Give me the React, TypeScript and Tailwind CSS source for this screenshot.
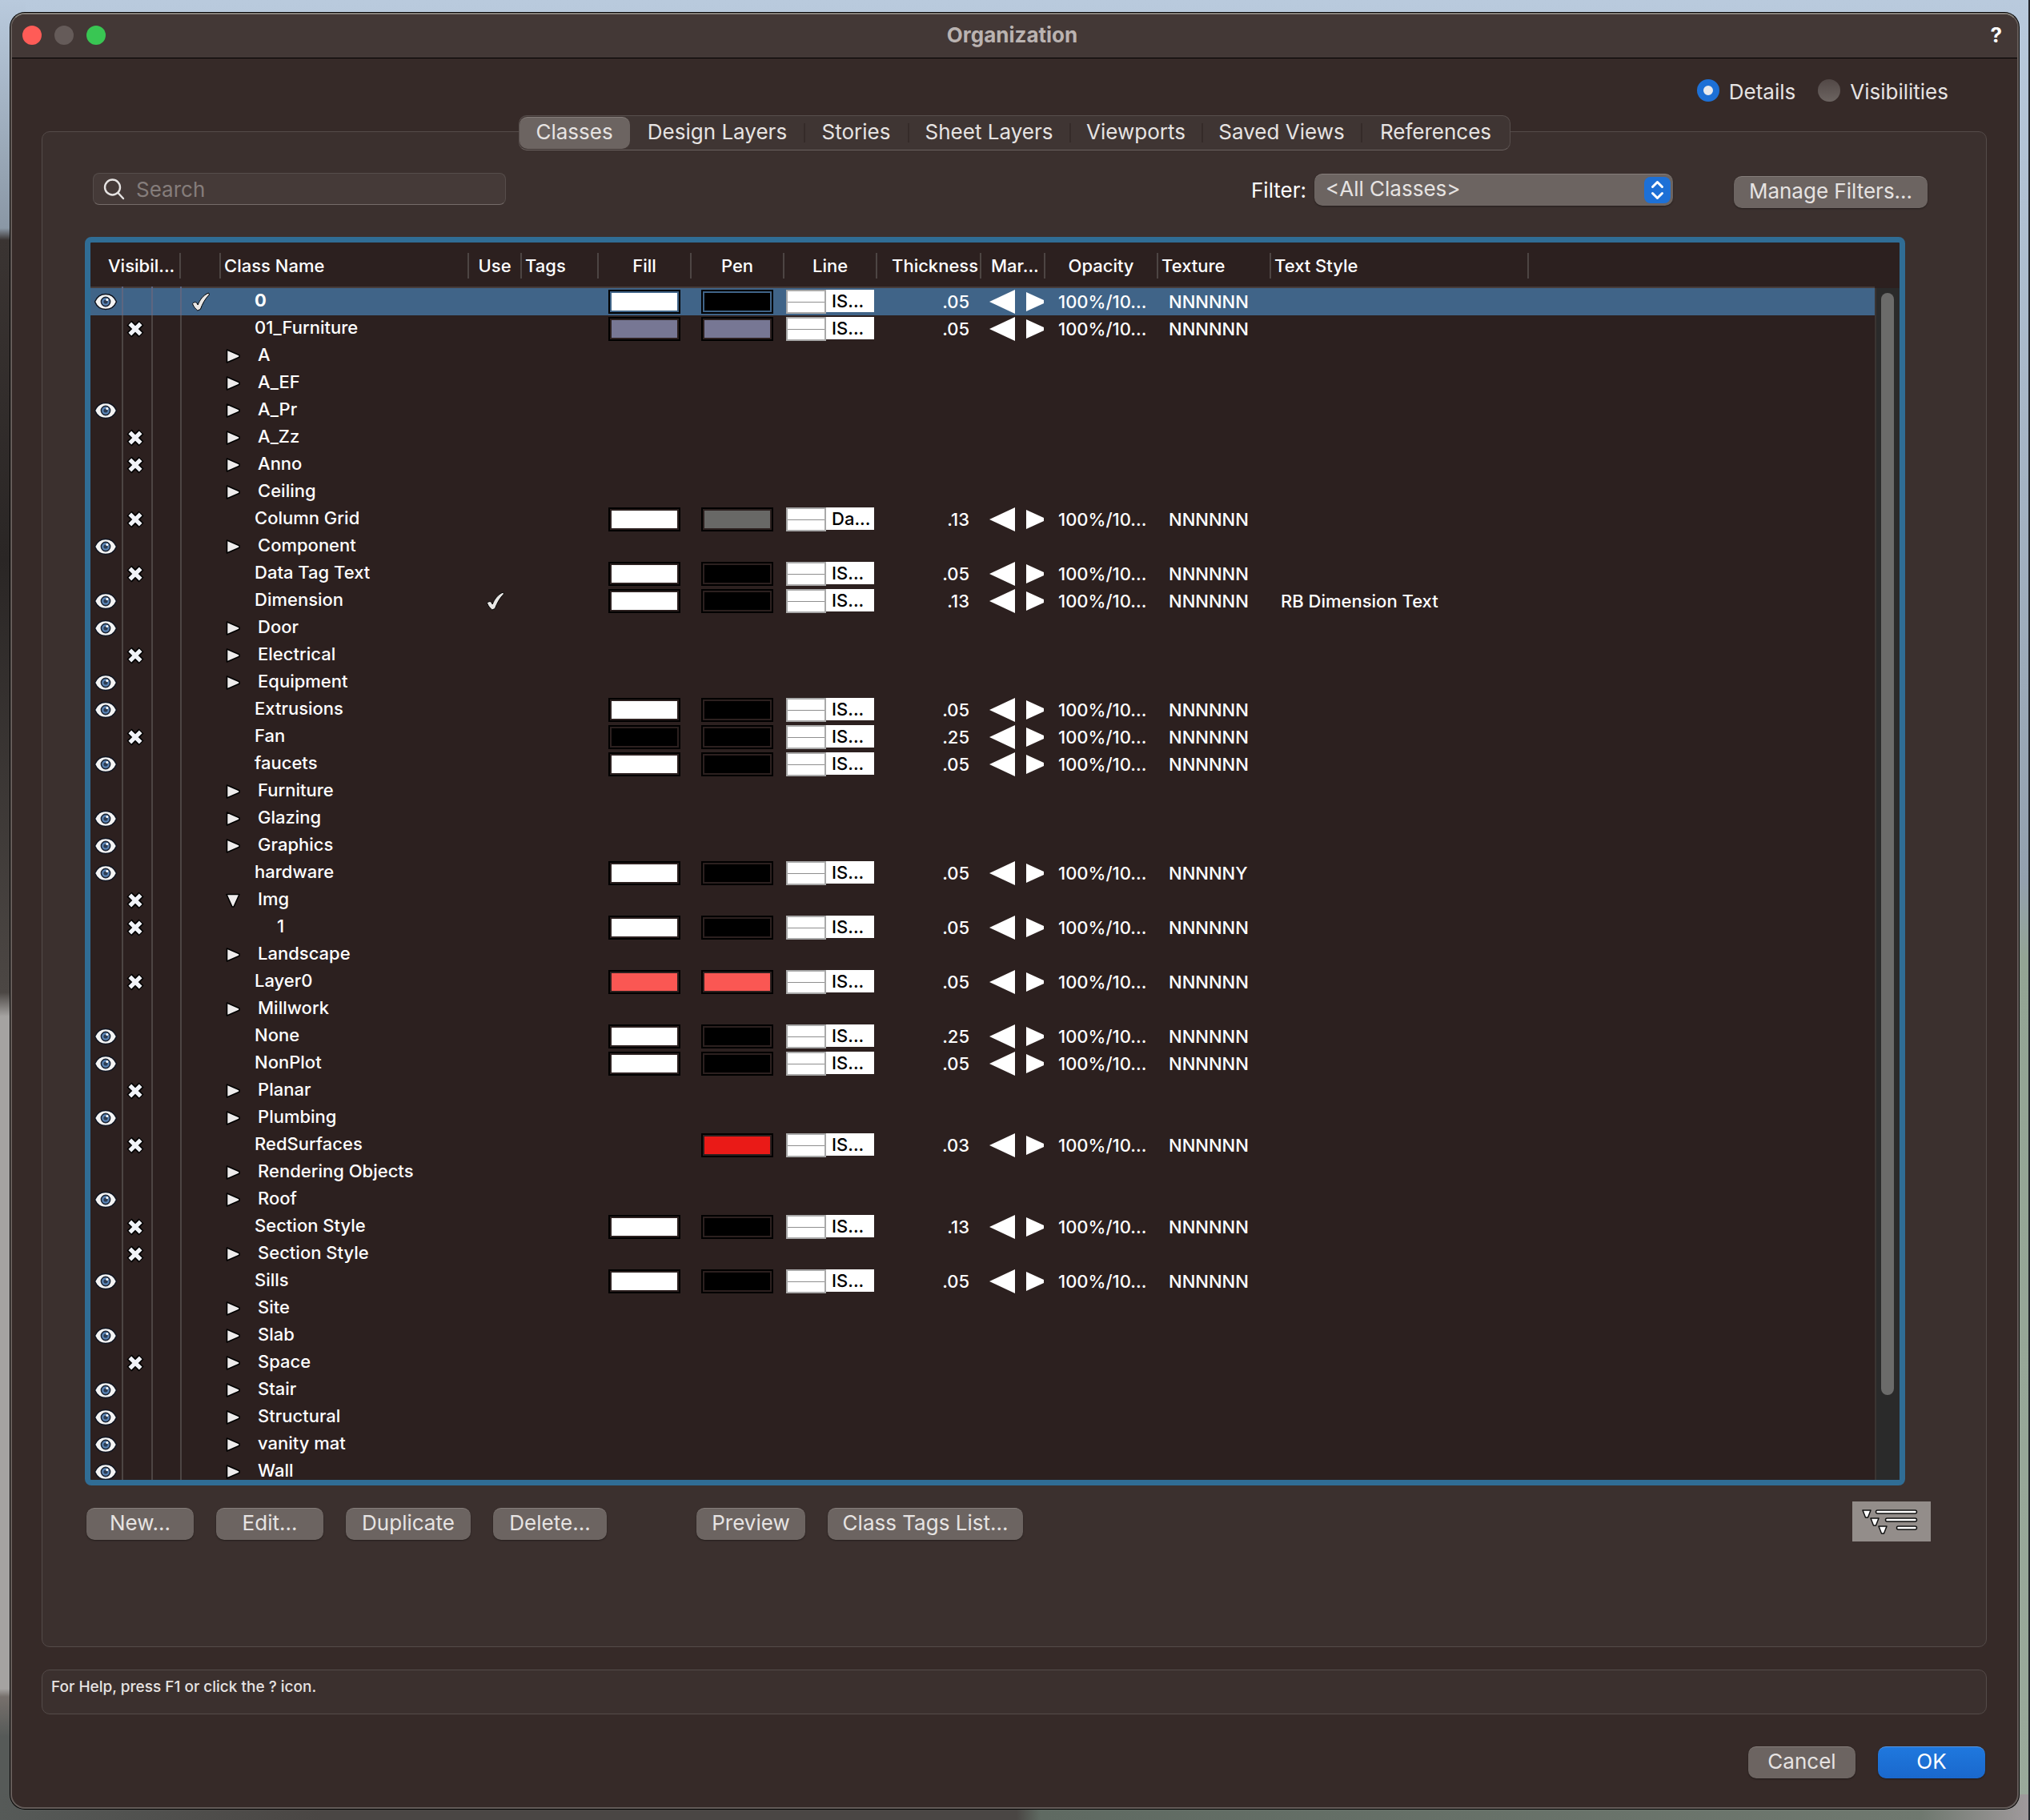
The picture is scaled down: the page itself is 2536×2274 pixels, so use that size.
import { useState } from "react";
import clsx from "clsx";

type Attrs = {
  fill?: string;
  pen: string;
  line?: string;
  thickness: string;
  texture?: string;
  textStyle?: string;
};

type ClassRow = {
  name: string;
  kind: "leaf" | "group" | "open" | "child";
  vis?: "eye" | "x";
  active?: boolean;
  use?: boolean;
  attrs?: Attrs;
};

const WHITE = "bg-white";
const BLACK = "bg-black";

const std: Attrs = { fill: WHITE, pen: BLACK, thickness: ".05" };

const rows: ClassRow[] = [
  { name: "0", kind: "leaf", vis: "eye", active: true, attrs: std },
  { name: "01_Furniture", kind: "leaf", vis: "x", attrs: { fill: "bg-[#777794]", pen: "bg-[#777794]", thickness: ".05" } },
  { name: "A", kind: "group" },
  { name: "A_EF", kind: "group" },
  { name: "A_Pr", kind: "group", vis: "eye" },
  { name: "A_Zz", kind: "group", vis: "x" },
  { name: "Anno", kind: "group", vis: "x" },
  { name: "Ceiling", kind: "group" },
  { name: "Column Grid", kind: "leaf", vis: "x", attrs: { fill: WHITE, pen: "bg-[#686866]", line: "Da...", thickness: ".13" } },
  { name: "Component", kind: "group", vis: "eye" },
  { name: "Data Tag Text", kind: "leaf", vis: "x", attrs: std },
  { name: "Dimension", kind: "leaf", vis: "eye", use: true, attrs: { ...std, thickness: ".13", textStyle: "RB Dimension Text" } },
  { name: "Door", kind: "group", vis: "eye" },
  { name: "Electrical", kind: "group", vis: "x" },
  { name: "Equipment", kind: "group", vis: "eye" },
  { name: "Extrusions", kind: "leaf", vis: "eye", attrs: std },
  { name: "Fan", kind: "leaf", vis: "x", attrs: { fill: BLACK, pen: BLACK, thickness: ".25" } },
  { name: "faucets", kind: "leaf", vis: "eye", attrs: std },
  { name: "Furniture", kind: "group" },
  { name: "Glazing", kind: "group", vis: "eye" },
  { name: "Graphics", kind: "group", vis: "eye" },
  { name: "hardware", kind: "leaf", vis: "eye", attrs: { ...std, texture: "NNNNNY" } },
  { name: "Img", kind: "open", vis: "x" },
  { name: "1", kind: "child", vis: "x", attrs: std },
  { name: "Landscape", kind: "group" },
  { name: "Layer0", kind: "leaf", vis: "x", attrs: { fill: "bg-[#fa5753]", pen: "bg-[#fa5753]", thickness: ".05" } },
  { name: "Millwork", kind: "group" },
  { name: "None", kind: "leaf", vis: "eye", attrs: { ...std, thickness: ".25" } },
  { name: "NonPlot", kind: "leaf", vis: "eye", attrs: std },
  { name: "Planar", kind: "group", vis: "x" },
  { name: "Plumbing", kind: "group", vis: "eye" },
  { name: "RedSurfaces", kind: "leaf", vis: "x", attrs: { pen: "bg-[#ea1a17]", thickness: ".03" } },
  { name: "Rendering Objects", kind: "group" },
  { name: "Roof", kind: "group", vis: "eye" },
  { name: "Section Style", kind: "leaf", vis: "x", attrs: { ...std, thickness: ".13" } },
  { name: "Section Style", kind: "group", vis: "x" },
  { name: "Sills", kind: "leaf", vis: "eye", attrs: std },
  { name: "Site", kind: "group" },
  { name: "Slab", kind: "group", vis: "eye" },
  { name: "Space", kind: "group", vis: "x" },
  { name: "Stair", kind: "group", vis: "eye" },
  { name: "Structural", kind: "group", vis: "eye" },
  { name: "vanity mat", kind: "group", vis: "eye" },
  { name: "Wall", kind: "group", vis: "eye" },
];

const tabs = [
  { label: "Classes", width: "w-[138px]" },
  { label: "Design Layers", width: "w-[217px]" },
  { label: "Stories", width: "w-[130px]" },
  { label: "Sheet Layers", width: "w-[202px]" },
  { label: "Viewports", width: "w-[165px]" },
  { label: "Saved Views", width: "w-[199px]" },
  { label: "References", width: "w-[186px]" },
];

const headers = [
  { label: "Visibil...", span: 3, cls: "pl-[22px]" },
  { label: "", cls: "" },
  { label: "Class Name", cls: "pl-1" },
  { label: "Use", cls: "justify-center" },
  { label: "Tags", cls: "pl-1" },
  { label: "Fill", cls: "justify-center" },
  { label: "Pen", cls: "justify-center" },
  { label: "Line", cls: "justify-center" },
  { label: "Thickness", cls: "justify-end pr-[2px]" },
  { label: "Mar...", cls: "pl-3" },
  { label: "Opacity", cls: "justify-center" },
  { label: "Texture", cls: "pl-1" },
  { label: "Text Style", cls: "pl-1" },
];

function EyeIcon() {
  return (
    <svg width="30" height="22" viewBox="0 0 30 22" className="ml-1 block">
      <path d="M1.5 11C4 5 9 1.5 15 1.5S26 5 28.500 11C26 17 21 20.500 15 20.500S4 17 1.500 11Z" fill="#f4f4f4" stroke="#0f1420" strokeWidth="1.500" />
      <circle cx="15" cy="11" r="5.600" fill="#5b86b8" stroke="#1c2636" strokeWidth="1.600" />
      <circle cx="15" cy="11" r="2.600" fill="#2c3c52" />
      <circle cx="16.800" cy="8.600" r="1.500" fill="#fff" />
    </svg>
  );
}

function CrossIcon() {
  return (
    <svg width="22" height="22" viewBox="0 0 22 22" className="ml-1 block">
      <path d="M3.500 3.500 18.500 18.500M18.500 3.500 3.500 18.500" stroke="#000" strokeWidth="8.600" />
      <path d="M4.300 4.300 17.700 17.700M17.700 4.300 4.300 17.700" stroke="#f1f3f8" strokeWidth="5.200" />
    </svg>
  );
}

function CheckIcon() {
  return (
    <svg width="24" height="24" viewBox="0 0 24 24" className="block">
      <path d="M1.500 14.500C3 12.300 6 12 7 13.800L8.200 16C10.500 10 14.500 4 21.500 1L22.500 3C17 8.500 14 14.500 11.300 21.500L7.800 23C5.500 21 3 18.500 1.500 14.500Z" fill="#e9e7e5" stroke="#000" strokeWidth="1" />
    </svg>
  );
}

function Disclosure({ open }: { open?: boolean }) {
  return (
    <svg width="18" height="18" viewBox="0 0 18 18" className="block">
      <path d={open ? "M1 1.500H17L10 17H8Z" : "M1.500 1 17 7.800V10.200L1.500 17Z"} fill="#eeecec" stroke="#000" strokeWidth="1.600" strokeLinejoin="round" />
    </svg>
  );
}

function Swatch({ color }: { color: string }) {
  return (
    <div className="ml-3 h-[30px] w-[90px] border-2 border-black p-[2px]">
      <div className={clsx("h-full w-full", color)} />
    </div>
  );
}

function LineSample({ label }: { label: string }) {
  return (
    <div className="ml-[2px] flex h-[30px] items-start">
      <div className="flex h-[30px] w-[50px] items-center border-2 border-[#a9a9a9] bg-white">
        <div className="h-px w-full bg-[#8f8f8f]" />
      </div>
      <div className="h-7 w-[60px] bg-white pl-[7px] leading-7 text-black">{label}</div>
    </div>
  );
}

function Markers() {
  return (
    <svg width="70" height="30" viewBox="0 0 70 30" className="ml-[10px] block" fill="#fff">
      <path d="M0 15 32 0V30Z" />
      <path d="M46 3 68 13V17L46 27Z" />
    </svg>
  );
}

function Row({ row }: { row: ClassRow }) {
  const { attrs } = row;
  const guide = clsx("border-r-2 p-0", row.active ? "border-[#5d6680]" : "border-[#4d4543]");
  return (
    <tr className={clsx("h-[34px]", row.active && "bg-[#406488]")}>
      <td className={guide}>{row.vis === "eye" && <EyeIcon />}</td>
      <td className={guide}>{row.vis === "x" && <CrossIcon />}</td>
      <td className={guide} />
      <td className="p-0">
        <div className="pl-3">{row.active && <CheckIcon />}</div>
      </td>
      <td className="p-0">
        <div className={clsx("flex h-[34px] items-center pl-[6px]", row.active && "font-bold")}>
          <span className="w-[18px]">
            {row.kind === "group" && <Disclosure />}
            {row.kind === "open" && <Disclosure open />}
          </span>
          <span
            className={clsx(
              "pb-1",
              row.kind === "leaf" && "pl-[18px]",
              row.kind === "child" && "pl-[46px]",
              (row.kind === "group" || row.kind === "open") && "pl-[22px]"
            )}
          >
            {row.name}
          </span>
        </div>
      </td>
      <td className="p-0">
        <div className="flex justify-center">{row.use && <CheckIcon />}</div>
      </td>
      <td className="p-0" />
      <td className="p-0">{attrs?.fill && <Swatch color={attrs.fill} />}</td>
      <td className="p-0">{attrs && <Swatch color={attrs.pen} />}</td>
      <td className="p-0">{attrs && <LineSample label={attrs.line ?? "IS..."} />}</td>
      <td className="p-0 pr-[15px] text-right">{attrs?.thickness}</td>
      <td className="p-0">{attrs && <Markers />}</td>
      <td className="p-0 pl-4">{attrs && "100%/10..."}</td>
      <td className="p-0 pl-[13px]">{attrs && (attrs.texture ?? "NNNNNN")}</td>
      <td className="p-0 pl-3">{attrs?.textStyle}</td>
      <td className="p-0" />
    </tr>
  );
}

function ClassTable() {
  return (
    <div className="mt-9 mr-[101px] ml-[53px] flex h-[1560px] overflow-hidden rounded-lg border-[7px] border-[#306d95] bg-[#2c201f]">
      <div className="min-w-0 flex-1 overflow-hidden">
        <table className="w-full table-fixed border-collapse text-[22px] leading-7 font-medium whitespace-nowrap text-white">
          <colgroup>
            <col className="w-[40px]" />
            <col className="w-[37px]" />
            <col className="w-[36px]" />
            <col className="w-[50px]" />
            <col className="w-[310px]" />
            <col className="w-[66px]" />
            <col className="w-[96px]" />
            <col className="w-[116px]" />
            <col className="w-[116px]" />
            <col className="w-[116px]" />
            <col className="w-[130px]" />
            <col className="w-[80px]" />
            <col className="w-[141px]" />
            <col className="w-[141px]" />
            <col className="w-[322px]" />
            <col />
          </colgroup>
          <thead>
            <tr className="h-[56px] border-b-2 border-[#463c3a]">
              {headers.map((h, i) => (
                <th key={i} colSpan={h.span} className="p-0 pt-[2px] text-left font-medium">
                  <div className={clsx("flex h-8 items-center border-r-2 border-[#4d4543]", h.cls)}>{h.label}</div>
                </th>
              ))}
              <th className="p-0" />
            </tr>
          </thead>
          <tbody>
            {rows.map((row, i) => (
              <Row key={i} row={row} />
            ))}
          </tbody>
        </table>
      </div>
      <div className="w-[31px] pt-[57px]">
        <div className="h-full border-l-2 border-[#3a3432] bg-[#2a2a2a] pt-[6px]">
          <div className="ml-[6px] h-[1377px] w-4 rounded-full bg-[#6b6b6a]" />
        </div>
      </div>
    </div>
  );
}

function PushButton({ label, className, primary }: { label: string; className: string; primary?: boolean }) {
  return (
    <button
      type="button"
      className={clsx(
        "h-10 rounded-[10px] border-t pb-[3px] text-center leading-9 whitespace-nowrap shadow-[0_1px_2px_rgba(0,0,0,0.4)]",
        primary ? "border-[#5596e2] bg-linear-to-b from-[#1f78de] to-[#1a68cc] text-white" : "border-[#857d7a] bg-[#6c6461] text-[#e6e3e2]",
        className
      )}
    >
      {label}
    </button>
  );
}

function HierarchyIcon() {
  return (
    <svg width="98" height="50" viewBox="0 0 98 50" fill="#fff" stroke="#111" strokeWidth="1.500" strokeLinejoin="round">
      <path d="M13 11H23L19.500 20H16.500Z" />
      <path d="M23 21H33L29.500 30H26.500Z" />
      <path d="M33 31H43L39.500 40H36.500Z" />
      <rect x="29.500" y="11" width="51" height="4" rx="2" />
      <rect x="41.500" y="21" width="39" height="4" rx="2" />
      <rect x="55.500" y="31" width="25" height="4" rx="2" />
    </svg>
  );
}

export default function App() {
  const [tab, setTab] = useState("Classes");
  const [mode, setMode] = useState("Details");

  return (
    <div className="relative min-h-screen bg-[linear-gradient(to_bottom,#b9cadd,#93a0ae_1100px,#93a494_1200px,#9aa99b)] pt-4 pr-[14px] pb-[14px] pl-[13px] font-['Inter','Liberation_Sans',sans-serif] text-[26px] leading-9 text-[#e6e3e2]">
      {/* desktop behind the left, bottom and right edges of the window */}
      <div className="absolute top-0 left-0 h-full w-8 bg-[linear-gradient(to_bottom,#b9cadd,#8a97a5_285px,#3a3432_300px,#2a2625_700px,#4c4744_1240px,#a5a3a1_1270px,#a5a3a1_2110px,#77706c_2120px,#565a58_2170px)]" />
      <div className="absolute bottom-0 left-0 h-8 w-full bg-[linear-gradient(to_right,#565a58,#4a4644_400px,#4a4644_1270px,#5f6a62_1300px,#6f786f_2400px,#a09a9c)]" />
      <div className="absolute top-0 right-0 h-full w-[2px] bg-[#23262b]" />

      <main className="relative overflow-hidden rounded-[18px] border-2 border-[#655d5a] border-t-[#85807a] bg-[#362a28] pb-9 shadow-[0_0_0_1px_#000]">
        <header className="flex h-[55px] items-center border-b border-black bg-[#433836] px-[13px] pb-[2px]">
          <div className="flex flex-1 gap-4">
            <button type="button" aria-label="Close" className="size-6 rounded-full bg-[#ff5c57]" />
            <button type="button" aria-label="Minimize" className="size-6 rounded-full bg-[#655b59]" />
            <button type="button" aria-label="Zoom" className="size-6 rounded-full bg-[#39c653]" />
          </div>
          <h1 className="font-bold text-[#bab3b1]">Organization</h1>
          <div className="flex flex-1 justify-end pr-[6px]">
            <button type="button" className="font-bold text-white">?</button>
          </div>
        </header>

        <div className="pt-[27px] pr-[38px] pl-[37px]">
          <div className="mb-4 flex h-7 items-center justify-end gap-7 pr-12">
            {["Details", "Visibilities"].map((m) => (
              <label key={m} className="flex items-start gap-3">
                <input
                  type="radio"
                  name="mode"
                  checked={mode === m}
                  onChange={() => setMode(m)}
                  className="mt-1 size-7 appearance-none rounded-full bg-linear-to-b from-[#524846] to-[#6c6461] checked:border-8 checked:border-[#1d70d6] checked:bg-[#e8eaee] checked:bg-none"
                />
                <span className="pt-[2px]">{m}</span>
              </label>
            ))}
          </div>

          <div className="relative z-10 flex justify-center">
            <div role="tablist" className="flex h-11 items-center rounded-[10px] border border-[#574e4c] border-b-[#6a615f] bg-[#3f3533]">
              {tabs.map((t, i) => (
                <button
                  key={t.label}
                  type="button"
                  role="tab"
                  aria-selected={tab === t.label}
                  onClick={() => setTab(t.label)}
                  className={clsx(
                    "whitespace-nowrap",
                    t.width,
                    tab === t.label
                      ? "h-10 rounded-[10px] border-t border-[#857d7a] bg-[#6c6461] pb-[3px]"
                      : "h-6 border-l-2 pb-[2px] leading-[22px]",
                    tab !== t.label && (tabs[i - 1]?.label === tab ? "border-transparent" : "border-[#352b29]")
                  )}
                >
                  {t.label}
                </button>
              ))}
            </div>
          </div>

          <section className="-mt-6 rounded-[10px] border border-[#544b49] bg-[#3b302e] pt-[51px] pb-[131px]">
            <div className="flex h-11 items-start pr-[73px] pl-[63px]">
              <label className="flex h-10 w-[516px] items-center gap-[14px] rounded-lg border border-[#564d4b] border-b-[#756c6a] bg-[#453a38] pl-3">
                <svg width="27" height="27" viewBox="0 0 27 27" fill="none" stroke="#e6e3e2" strokeWidth="2.400" strokeLinecap="round">
                  <circle cx="11.500" cy="11" r="9.500" />
                  <path d="M18.500 18 25 25" />
                </svg>
                <input type="text" aria-label="Search" placeholder="Search" className="min-w-0 flex-1 bg-transparent pt-[2px] outline-none placeholder:text-[#857d7b]" />
              </label>
              <div className="ml-auto flex h-11 items-start gap-[10px]">
                <label htmlFor="filter" className="pt-1 text-white">Filter:</label>
                <div className="relative pt-px">
                  <select id="filter" className="block h-10 w-[448px] appearance-none rounded-[10px] border-t border-[#857d7a] bg-[#6c6461] pr-10 pb-[3px] pl-[14px] text-[#e6e3e2] shadow-[0_1px_2px_rgba(0,0,0,0.4)]">
                    <option>&lt;All Classes&gt;</option>
                  </select>
                  <svg width="33" height="33" viewBox="0 0 33 33" className="pointer-events-none absolute top-[5px] right-[3px]" fill="none" stroke="#fff" strokeWidth="3" strokeLinecap="round" strokeLinejoin="round">
                    <rect width="33" height="33" rx="8" fill="#1d70d6" stroke="none" />
                    <path d="M10.500 12.500 16.500 6.500 22.500 12.500M10.500 20.500 16.500 26.500 22.500 20.500" />
                  </svg>
                </div>
              </div>
              <PushButton label="Manage Filters..." className="mt-1 ml-[76px] w-[242px]" />
            </div>

            <ClassTable />

            <div className="mt-5 flex items-start pr-[69px] pl-[55px]">
              <div className="flex gap-7 pt-2">
                <PushButton label="New..." className="w-[134px]" />
                <PushButton label="Edit..." className="w-[134px]" />
                <PushButton label="Duplicate" className="w-[156px]" />
                <PushButton label="Delete..." className="w-[142px]" />
              </div>
              <div className="ml-28 flex gap-7 pt-2">
                <PushButton label="Preview" className="w-[136px]" />
                <PushButton label="Class Tags List..." className="w-[244px]" />
              </div>
              <button type="button" aria-label="Hierarchical display" className="ml-auto bg-[#938d8a]">
                <HierarchyIcon />
              </button>
            </div>
          </section>

          <p className="mt-7 h-14 rounded-[10px] border border-[#544b49] bg-[#3b302e] px-[11px] pt-[9px] text-[19px] leading-6 font-medium">
            For Help, press F1 or click the ? icon.
          </p>

          <div className="mt-10 flex justify-end gap-7 pr-[2px]">
            <PushButton label="Cancel" className="w-[134px]" />
            <PushButton label="OK" className="w-[134px]" primary />
          </div>
        </div>
      </main>
    </div>
  );
}
